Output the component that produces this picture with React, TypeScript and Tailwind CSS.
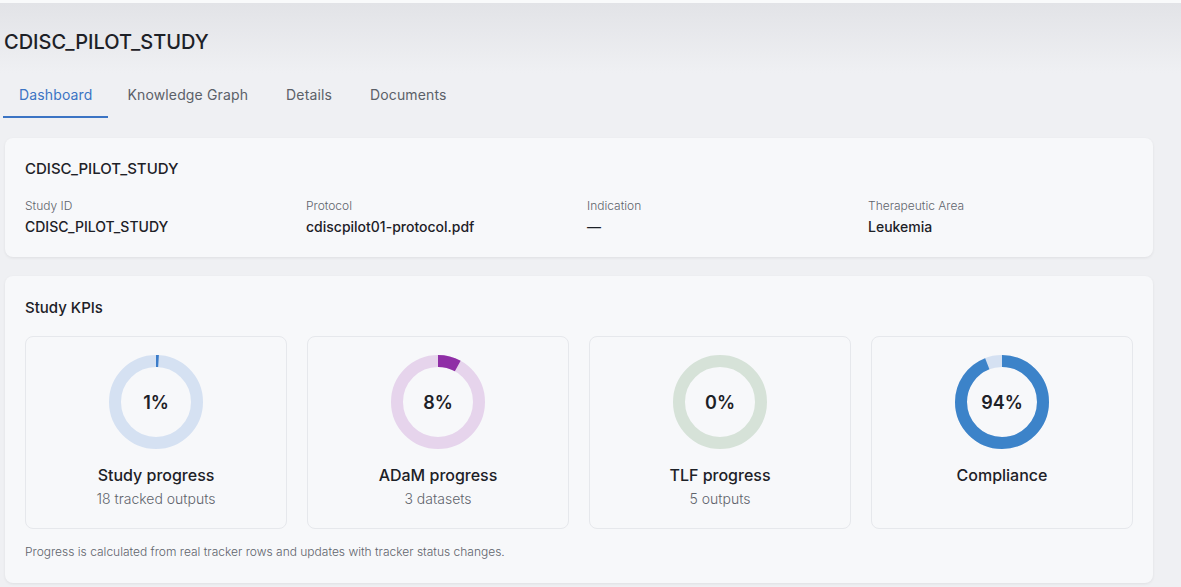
import React from 'react';

const font = { fontFamily: 'Inter, "Noto Sans", sans-serif' };

type Kpi = {
  value: number;
  label: string;
  sub?: string;
  color: string;
  track: string;
};

const kpis: Kpi[] = [
  { value: 1, label: 'Study progress', sub: '18 tracked outputs', color: '#3b7cc9', track: '#d5e1f2' },
  { value: 8, label: 'ADaM progress', sub: '3 datasets', color: '#8f2fa6', track: '#e6d4ec' },
  { value: 0, label: 'TLF progress', sub: '5 outputs', color: '#4f8a5b', track: '#d6e2d8' },
  { value: 94, label: 'Compliance', color: '#3c83c9', track: '#d5e1f2' },
];

function Donut({ value, color, track }: { value: number; color: string; track: string }) {
  const r = 41;
  const c = 2 * Math.PI * r;
  const len = (value / 100) * c;
  return (
    <div className="relative h-[94px] w-[94px]">
      <svg width="94" height="94" viewBox="0 0 94 94" className="-rotate-90">
        <circle cx="47" cy="47" r={r} fill="none" stroke={track} strokeWidth="12" />
        {value > 0 && (
          <circle
            cx="47"
            cy="47"
            r={r}
            fill="none"
            stroke={color}
            strokeWidth="12"
            strokeDasharray={`${len} ${c}`}
          />
        )}
      </svg>
      <div className="absolute inset-0 flex items-center justify-center text-[18px] font-semibold text-[#1d2127]">
        {value}%
      </div>
    </div>
  );
}

function Field({ label, value }: { label: string; value: string }) {
  return (
    <div>
      <div className="text-[12px] leading-4 font-light text-[#5f646c]">{label}</div>
      <div className="mt-[3px] text-[14px] leading-5 font-medium text-[#1d2127]">{value}</div>
    </div>
  );
}

export default function App() {
  const tabs = ['Dashboard', 'Knowledge Graph', 'Details', 'Documents'];
  return (
    <div
      style={font}
      className="min-h-[587px] border-t-[3px] border-[#f9fafb] bg-[linear-gradient(180deg,#e2e3e7_0px,#eff0f3_70px,#eff0f3_100%)] pl-[5px] pr-[28px] pb-6 pt-[25px]"
    >
      <h1 className="-ml-px text-[20px] leading-7 font-medium text-[#1d2127]">CDISC_PILOT_STUDY</h1>

      <div className="mt-[18px] flex -ml-[2px]">
        {tabs.map((t, i) => (
          <div
            key={t}
            className={
              i === 0
                ? 'border-b-2 border-[#3b74c4] px-4 py-[11px] text-[14px] leading-5 tracking-[0.01em] text-[#3b74c4]'
                : 'border-b-2 border-transparent px-[19px] py-[11px] text-[14px] leading-5 tracking-[0.01em] text-[#5b6068]'
            }
          >
            {t}
          </div>
        ))}
      </div>

      <div className="mt-5 rounded-lg bg-[#f7f8fa] px-5 py-5 shadow-[0_1px_3px_rgba(0,0,0,0.07)]">
        <div className="text-[15px] leading-[22px] font-medium text-[#1d2127]">CDISC_PILOT_STUDY</div>
        <div className="mt-[18px] grid grid-cols-4 gap-4">
          <Field label="Study ID" value="CDISC_PILOT_STUDY" />
          <Field label="Protocol" value="cdiscpilot01-protocol.pdf" />
          <Field label="Indication" value="—" />
          <Field label="Therapeutic Area" value="Leukemia" />
        </div>
      </div>

      <div className="mt-[19px] rounded-lg bg-[#f7f8fa] px-5 pb-[23px] pt-5 shadow-[0_1px_3px_rgba(0,0,0,0.07)]">
        <div className="text-[15px] leading-6 font-medium text-[#1d2127]">Study KPIs</div>
        <div className="mt-4 grid grid-cols-4 gap-5">
          {kpis.map((k) => (
            <div
              key={k.label}
              className="flex flex-col items-center rounded-lg border border-[#e6e8ec] bg-[#f7f8fa] pb-[19px] pt-[18px]"
            >
              <Donut value={k.value} color={k.color} track={k.track} />
              <div className="mt-[14px] text-[16px] leading-6 font-medium text-[#1d2127]">{k.label}</div>
              {k.sub ? (
                <div className="mt-[2px] text-[14px] leading-5 font-light text-[#5f646c]">{k.sub}</div>
              ) : (
                <div className="mt-[2px] h-5" />
              )}
            </div>
          ))}
        </div>
        <div className="mt-[15px] text-[12px] leading-4 font-light text-[#5f646c]">
          Progress is calculated from real tracker rows and updates with tracker status changes.
        </div>
      </div>
    </div>
  );
}
